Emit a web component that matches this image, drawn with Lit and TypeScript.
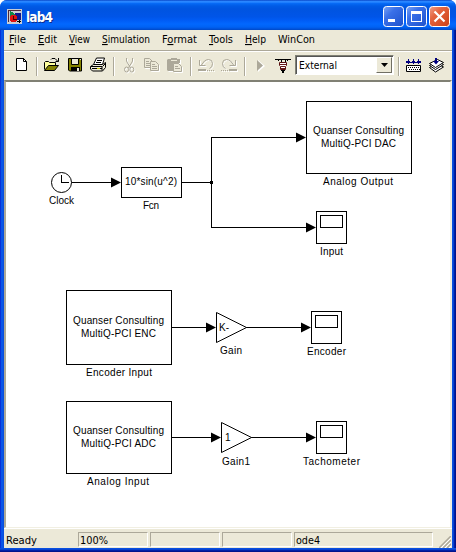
import { LitElement, html, svg, css } from "lit";
import { customElement } from "lit/decorators.js";

type Menu = [string, string, string, number];

const MENUS: Menu[] = [
  ["", "F", "ile", 17],
  ["", "E", "dit", 19],
  ["", "V", "iew", 21],
  ["", "S", "imulation", 48],
  ["F", "o", "rmat", 35],
  ["", "T", "ools", 24],
  ["", "H", "elp", 21],
  ["WinCon", "", "", 37],
];

// Horizontal runs "x,y,w" separated by blanks, drawn as one-pixel-high bars.
const px = (runs: string) =>
  runs.trim().split(/\s+/).map((r) => {
    const [x, y, w] = r.split(",");
    return `M${x} ${y}h${w}v1h-${w}z`;
  }).join("");

const cutIcon = (c: string) => svg`
  <path fill="none" stroke=${c} d="M126.500 58v3l1 2l2 3l1 2M132.500 58v3l-1 2l-2 3l-1 2"/>
  <ellipse fill="none" stroke=${c} cx="126.500" cy="69.500" rx="2" ry="2.500"/>
  <ellipse fill="none" stroke=${c} cx="131.800" cy="69.500" rx="2" ry="2.500"/>`;

const copyIcon = (c: string) => svg`
  <path fill="#ece9d8" stroke=${c} d="M144.500 58.500h5l3 3v6h-8z"/>
  <path fill="none" stroke=${c} d="M146 61.500h3M146 63.500h4M146 65.500h4"/>
  <path fill="#ece9d8" stroke=${c} d="M150.500 61.500h5l3 3v6h-8z"/>
  <path fill="none" stroke=${c} d="M152 64.500h3M152 66.500h5M152 68.500h5"/>`;

const pasteIcon = (c: string) => svg`
  <path fill=${c} d="M168 59h3v-1h6v1h3v4h-1v8h-11l-1-1v-10z"/>
  <path fill="#ece9d8" d="M171 60h6v1h-6z"/>
  <path fill="#ece9d8" stroke=${c} d="M173.500 63.500h5l3 3v5h-8z"/>
  <path fill="none" stroke=${c} d="M175 66.500h3M175 68.500h5"/>`;

const undoIcon = (c: string) => svg`
  <path fill="none" stroke=${c} d="M201 65.500l3.500-4.500q2-1.500 4-1.500q4 0 4 4t-3 5M199.500 60v5.500h6"/>
  <path fill=${c} d="M198 69h8v2h-8zM207 70h1v1h-1zM209 70h1v1h-1zM211 70h1v1h-1zM213 70h1v1h-1z"/>`;

const redoIcon = (c: string) => svg`
  <path fill="none" stroke=${c} d="M234 65.500l-3.500-4.500q-2-1.500-4-1.500q-4 0-4 4t3 5M235.500 60v5.500h-6"/>
  <path fill=${c} d="M229 69h8v2h-8zM227 70h1v1h-1zM225 70h1v1h-1zM223 70h1v1h-1zM221 70h1v1h-1z"/>`;

const disabled = (draw: (c: string) => unknown) => svg`
  <g transform="translate(1 1)">${draw("#ffffff")}</g>${draw("#aca899")}`;

const newIcon = svg`<path fill="#fff" stroke="#000" d="M16.500 58.500h7l3 3v9h-10z"/><path fill="none" stroke="#000" d="M23.500 58v3.500h3"/>`;

const openIcon = svg`
  <path fill="#ffff9c" stroke="#000" d="M44.500 69.500v-7l1-1h3l1 1h6v3"/>
  <path fill="#848200" stroke="#000" d="M44.500 70.500l4-5h10l-4 5z"/>
  <path fill="none" stroke="#000" d="M51 59.500l1-1h3l3 3M58.500 58v3.500h-3"/>`;

const saveIcon = svg`
  <path fill="#848200" stroke="#000" d="M68.500 58.500h13v12.500h-12l-1-1z"/>
  <path fill="#ece9d8" stroke="#000" d="M71.500 58.500h7v6h-7z"/>
  <path fill="#000" d="M71 67h9v4h-9z"/><path fill="#ece9d8" d="M77 68h2v3h-2zM80 59h1v1h-1z"/>`;

const printIcon = svg`
  <path fill="#fff" stroke="#000" d="M93.500 64.500l3-6.500h8l-2 6.500z"/>
  <path stroke="#000" d="M97 60.500h5M96 62.500h5"/>
  <path fill="#ece9d8" stroke="#000" d="M90.500 66.500l3-2h9l3-2v5l-3 3.500h-10l-2-2z"/>
  <path stroke="#000" fill="none" d="M91 66.500h11v4M102.500 66.500l3-3M92 68.500h10"/>
  <path stroke="#d0c800" d="M97 68.500h3"/>`;

const playIcon = svg`<path fill="#fff" d="M258 60l7 6l-7 6z"/><path fill="#aca899" d="M257 60l6 5.500l-6 5.500z"/>`;

const plugIcon = svg`
  <path fill="#000" d="M275 59h16v1h-16zM278 60h1v1h-1zM287 60h1v1h-1zM281 60h1v2h-1zM285 60h1v2h-1z"/>
  <path fill="#fff" stroke="#5a1010" d="M279.500 62.500h7v3l-1 1v3h-5v-3l-1-1z"/>
  <path stroke="#6b1818" d="M280 64.500h6M281 66.500h4M281 68.500h4"/>
  <path fill="#000" d="M281 70h4v1h-4zM282 71h2v2h-2z"/>`;

const buildIcon = svg`
  <path fill="#000080" d=${px("406,62,15 406,61,1 420,61,1")}/>
  <path stroke="#000080" d="M408.500 59v5M413.500 59v5M418.500 59v5"/>
  <path fill="#000080" d=${px("407,61,3 412,61,3 417,61,3")}/>
  <path fill="#fff" stroke="#000" d="M406.500 65.500h14v6h-14z"/>
  <path stroke="#000" stroke-dasharray="1 1" d="M408 67.500h12M409 69.500h11"/>`;

const stackIcon = svg`
  <path fill="#fff" stroke="#000" d="M429.500 67.500l8-4l6 3.500l-8 5z"/>
  <path fill="#fff" stroke="#000" d="M429.500 65.500l8-4l6 3l-8 5z"/>
  <path fill="#fff" stroke="#000" d="M429.500 63.500l8-4l6 3l-8 5z"/>
  <path fill="#000080" d="M435 58h2v3h2l-3 3.500l-3-3.500h2z"/>`;

const tool = (x: number, w: number, art: unknown) => html`
  <svg class="tool" width=${w} height="28" viewBox="${x} 52 ${w} 28">${art}</svg>`;

const sep = html`<i class="sep"></i>`;

const block = (x: number, y: number, w: number, h: number) =>
  svg`<rect class="shape" x=${x + 0.5} y=${y + 0.5} width=${w} height=${h}/>`;

const text = (s: string, x: number, y: number, w: number) =>
  svg`<text x=${x} y=${y} textLength=${w} lengthAdjust="spacing">${s}</text>`;

const arrow = (x: number, y: number) =>
  svg`<path class="head" d="M${x - 10} ${y - 4.5}l10 5l-10 5z"/>`;

const scope = (x: number, y: number) => svg`${block(x, y, 30, 32)}${block(x + 4, y + 4, 22, 12)}`;

@customElement("app-root")
export class AppRoot extends LitElement {
  static styles = css`
    :host { display: block; width: 456px; height: 552px; background: #fff; }
    * { box-sizing: border-box; }
    .window { display: flex; flex-direction: column; height: 552px; overflow: hidden;
      border-radius: 7px 7px 0 0; background: #0a50dc;
      font: 11px/14px "DejaVu Sans Condensed", "Noto Sans", sans-serif; color: #000; }
    .title { flex: none; height: 30px; display: flex; align-items: center; padding: 2px 6px 0 7px;
      background: linear-gradient(#0a48c8 0, #2a86ff 5%, #2080ff 8%, #0568f4 12%, #005be6 20%, #0054e0 30%, #0055e8 56%, #005cf5 68%, #0268fe 80%, #0062f4 90%, #0050d8 97%, #0048c0 100%); }
    .logo { flex: none; }
    .name { flex: 1; margin-left: 4px; color: #fff; font: bold 13.500px/18px "DejaVu Sans Condensed", sans-serif;
      letter-spacing: -.850px; text-shadow: 1px 1px #0a2f91; padding-top: 1px; }
    .buttons { display: flex; gap: 2px; margin-top: 1px; }
    .shell { flex: 1; display: flex; flex-direction: column; min-height: 0; padding: 0 4px 4px;
      background:
        linear-gradient(#0a50e0 0 1px, #0843d0 1px 2px, #0020a8 2px 3px, #00138c 3px) bottom / 100% 4px no-repeat,
        linear-gradient(90deg, #0831d9 0 1px, #0a55e8 1px 3px, #0a50dc 3px) left / 4px 100% no-repeat,
        linear-gradient(90deg, #0a50e0 0 1px, #0843d0 1px 2px, #0020a8 2px 3px, #00138c 3px) right / 4px 100% no-repeat; }
    .inner { flex: 1; min-height: 0; display: flex; flex-direction: column; background: #ece9d8; }
    .menu { flex: none; height: 20px; display: flex; gap: 12px; padding: 2px 0 0 5px; white-space: nowrap; }
    .item { flex: none; height: 14px; overflow: visible; }
    .item text, .fit text { font: 11px "DejaVu Sans Condensed", sans-serif; }
    .key { text-decoration: underline; }
    .bar { flex: none; height: 30px; display: flex; border-top: 1px solid #aca899; box-shadow: inset 0 1px #fff; padding: 1px 0 0 1px; }
    .tool { flex: none; display: block; }
    .sep { flex: none; width: 2px; height: 19px; margin-top: 5px; border-left: 1px solid #aca899; border-right: 1px solid #fff; }
    .combo { flex: none; width: 99px; height: 20px; margin: 3px 4px 0 0; display: flex; background: #fff; padding: 0 0 0 2px;
      border: 1px solid; border-color: #808074 #fff #fff #808074; box-shadow: inset 1px 1px #555; align-items: center; }
    .fit { flex: 1; min-width: 0; height: 16px; overflow: visible; }
    .cell .fit { height: 13px; }
    .drop { flex: none; width: 16px; height: 16px; background: #ece9d8; border: 1px solid; border-color: #fff #716f64 #716f64 #fff;
      display: flex; justify-content: center; align-items: center; margin-right: 1px; }
    .canvas { flex: 1; min-height: 0; background: #fff; border: solid; border-width: 2px 2px 1px 2px;
      border-color: #808074 #f1efe2 #f1efe2 #aca899; }
    .diagram { display: block; overflow: hidden; }
    .diagram text { font: 10px "Liberation Sans", Arial, sans-serif; fill: #000; }
    .shape { fill: #fff; stroke: #000; stroke-width: 1; shape-rendering: crispEdges; }
    .tri { fill: #fff; stroke: #000; stroke-width: 1; }
    .wire { fill: none; stroke: #000; shape-rendering: crispEdges; }
    .head { fill: #000; }
    .status { flex: none; height: 20px; display: flex; gap: 2px; padding: 3px 0 1px 1px; border-top: 1px solid #fff; }
    .cell { flex: none; border: 1px solid; border-color: #aca899 #fff #fff #aca899; display: flex; align-items: center; padding-left: 1px; }
    .ready { width: 71px; border-color: transparent; padding-left: 0; }
    .short { width: 70px; }
    .long { width: 139px; }
    .grip { flex: none; margin: 4px 0 0 4px; align-self: flex-start; }
  `;

  private winButton(kind: string) {
    const close = kind === "close";
    return html`<svg width="21" height="21" viewBox="0 0 21 21">
      <defs><linearGradient id=${"face-" + kind} x1="0" y1="0" x2="1" y2="1">
        <stop offset="0" stop-color=${close ? "#f0a08a" : "#7ba4f5"}/>
        <stop offset=".35" stop-color=${close ? "#e4643f" : "#3a70e8"}/>
        <stop offset="1" stop-color=${close ? "#cc4016" : "#1c50cc"}/></linearGradient></defs>
      <rect x=".5" y=".5" width="20" height="20" rx="3" fill=${`url(#face-${kind})`} stroke="#fff"/>
      ${kind === "min" ? svg`<path fill="#fff" d="M5 13h7v3h-7z"/>` : ""}
      ${kind === "max" ? svg`<path fill="#fff" fill-rule="evenodd" d="M5 5h11v11h-11zM6 8v7h9v-7z"/>` : ""}
      ${close ? svg`<path stroke="#fff" stroke-width="2.200" d="M5.500 5.500l10 10M15.500 5.500l-10 10"/>` : ""}
    </svg>`;
  }

  render() {
    return html`<div class="window">
      <div class="title">
        <svg class="logo" width="15" height="15" viewBox="0 0 15 15" shape-rendering="crispEdges">
          <path fill="#c8ccd4" d="M0 0h15v15h-15z"/><path fill="#502838" d="M1 1h13v1h-12v11h-1z"/>
          <path fill="#108848" d="M3 2l7 4l-7 5z"/><path fill="#101890" d="M8 4h6v7h-6z"/>
          <circle cx="6.500" cy="9.500" r="3.700" fill="#e01010"/><path fill="#400" d="M6 7h1v3h3v1h-4z"/>
          <path fill="#000" d="M10 12h4v1h-4zM12 11h1v3h-1z"/>
        </svg>
        <span class="name">lab4</span>
        <div class="buttons">${this.winButton("min")}${this.winButton("max")}${this.winButton("close")}</div>
      </div>
      <div class="shell"><div class="inner">
        <div class="menu">
          ${MENUS.map(([a, k, b, w]) => html`<svg class="item" width=${w} height="14"><text x="0" y="11" textLength=${w} lengthAdjust="spacingAndGlyphs">${a}<tspan class="key">${k}</tspan>${b}</text></svg>`)}
        </div>
        <div class="bar">
          ${tool(5, 31, newIcon)}${sep}${tool(38, 25, openIcon)}${tool(63, 23, saveIcon)}${tool(86, 27, printIcon)}${sep}
          ${tool(115, 25, disabled(cutIcon))}${tool(140, 24, disabled(copyIcon))}${tool(164, 26, disabled(pasteIcon))}${sep}
          ${tool(192, 25, disabled(undoIcon))}${tool(217, 27, disabled(redoIcon))}${sep}
          ${tool(246, 24, playIcon)}${tool(270, 25, plugIcon)}
          <div class="combo">
            <svg class="fit"><text x="1" y="12" textLength="38" lengthAdjust="spacingAndGlyphs">External</text></svg>
            <span class="drop"><svg width="7" height="4"><path d="M0 0h7l-3.500 4z"/></svg></span>
          </div>
          ${sep}${tool(400, 24, buildIcon)}${tool(424, 24, stackIcon)}
        </div>
        <div class="canvas">
          <svg class="diagram" width="444" height="445" viewBox="6 82 444 445">
            <path class="wire" d="M71 182.500H112M181 182.500H211.500M296 137.500H211.500V227.500H306M171 327.500H206M246 327.500H301M171 437.500H211M251 437.500H306"/>
            <rect x="210" y="181" width="3" height="3"/>
            <circle class="tri" cx="61.500" cy="182.500" r="10"/>
            <path class="wire" d="M61.500 175V182.500H69"/>
            ${block(121, 167, 60, 30)}${block(306, 101, 105, 72)}${block(66, 290, 105, 74)}${block(66, 401, 105, 72)}
            ${scope(316, 211)}${scope(311, 311)}${scope(316, 421)}
            <path class="tri" d="M216.500 312.500v30l30-15zM221.500 422.500v30l30-15z"/>
            ${arrow(121, 182)}${arrow(306, 137)}${arrow(316, 227)}${arrow(216, 327)}${arrow(311, 327)}${arrow(221, 437)}${arrow(316, 437)}
            ${text("Clock", 49, 204, 25)}${text("10*sin(u^2)", 125, 185, 52)}${text("Fcn", 143, 209, 16)}
            ${text("Quanser Consulting", 313, 134, 91)}${text("MultiQ-PCI DAC", 321, 147, 75)}${text("Analog Output", 323, 185, 70)}
            ${text("Input", 320, 255, 23)}
            ${text("Quanser Consulting", 73, 324, 91)}${text("MultiQ-PCI ENC", 81, 337, 75)}${text("Encoder Input", 86, 376, 66)}
            ${text("K-", 219, 331, 10)}${text("Gain", 220, 354, 22)}${text("Encoder", 307, 355, 39)}
            ${text("Quanser Consulting", 73, 434, 91)}${text("MultiQ-PCI ADC", 81, 447, 75)}${text("Analog Input", 87, 485, 62)}
            ${text("1", 225, 441, 6)}${text("Gain1", 222, 465, 28)}${text("Tachometer", 303, 465, 57)}
          </svg>
        </div>
        <div class="status">
          <div class="cell ready"><svg class="fit"><text x="0" y="11" textLength="31" lengthAdjust="spacingAndGlyphs">Ready</text></svg></div>
          <div class="cell short"><svg class="fit"><text x="0" y="11" textLength="28" lengthAdjust="spacingAndGlyphs">100%</text></svg></div>
          <div class="cell short"></div><div class="cell short"></div>
          <div class="cell long"><svg class="fit"><text x="0" y="11" textLength="24" lengthAdjust="spacingAndGlyphs">ode4</text></svg></div>
          <svg class="grip" width="12" height="12"><path fill="none" stroke="#fff" d="M2 12L12 2M6 12L12 6M10 12L12 10"/><path fill="none" stroke="#aca899" stroke-width="1.500" d="M0 12L12 0M4 12L12 4M8 12L12 8"/></svg>
        </div>
      </div></div>
    </div>`;
  }
}
